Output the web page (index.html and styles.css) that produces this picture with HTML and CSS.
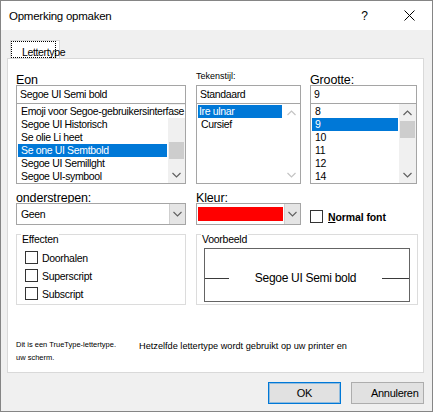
FILE: index.html
```html
<!DOCTYPE html>
<html lang="nl">
<head>
<meta charset="utf-8">
<title>Opmerking opmaken</title>
<link rel="stylesheet" href="styles.css">
</head>
<body>
<div class="window">
  <div class="titlebar">
    <span class="title">Opmerking opmaken</span>
    <span class="help">?</span>
    <svg class="close" width="11" height="11" viewBox="0 0 11 11"><path d="M0.5 0.5 L10.5 10.5 M10.5 0.5 L0.5 10.5" stroke="#000" stroke-width="1" fill="none"/></svg>
  </div>
  <div class="client">
    <div class="tabs">
      <div class="tab"><div class="tab-focus"><span class="tab-label">Lettertype</span></div></div>
    </div>
    <div class="panel">
      <div class="top">
        <div class="col">
          <div class="lbl-area"><span class="lbl">Eon</span></div>
          <div class="field">Segoe UI Semi bold</div>
          <div class="list">
            <div class="items">
              <div class="item wide">Emoji voor Segoe-gebruikersinterfase</div>
              <div class="item">Segoe UI Historisch</div>
              <div class="item">Se olie Li heet</div>
              <div class="item sel">Se one UI Semtbold</div>
              <div class="item">Segoe UI Semillght</div>
              <div class="item">Segoe UI-symbool</div>
            </div>
            <div class="vscroll">
              <div class="arrow"><svg width="9" height="6" viewBox="0 0 9 6"><path d="M0.5 5 L4.5 1 L8.5 5" stroke="#606060" stroke-width="1.2" fill="none"/></svg></div>
              <div class="track"><div class="thumb t1"></div></div>
              <div class="arrow"><svg width="9" height="6" viewBox="0 0 9 6"><path d="M0.5 1 L4.5 5 L8.5 1" stroke="#606060" stroke-width="1.2" fill="none"/></svg></div>
            </div>
          </div>
        </div>
        <div class="col col2">
          <div class="lbl-area"><span class="lbl small">Tekenstijl:</span></div>
          <div class="field">Standaard</div>
          <div class="list">
            <div class="items">
              <div class="item sel short">Ire ulnar</div>
              <div class="item">Cursief</div>
            </div>
            <div class="vscroll disabled">
              <div class="arrow"><svg width="9" height="6" viewBox="0 0 9 6"><path d="M0.5 5 L4.5 1 L8.5 5" stroke="#c4c4c4" stroke-width="1.2" fill="none"/></svg></div>
              <div class="track"></div>
              <div class="arrow"><svg width="9" height="6" viewBox="0 0 9 6"><path d="M0.5 1 L4.5 5 L8.5 1" stroke="#c4c4c4" stroke-width="1.2" fill="none"/></svg></div>
            </div>
          </div>
        </div>
        <div class="col">
          <div class="lbl-area"><span class="lbl">Grootte:</span></div>
          <div class="field">9</div>
          <div class="list">
            <div class="items">
              <div class="item">8</div>
              <div class="item sel">9</div>
              <div class="item">10</div>
              <div class="item">11</div>
              <div class="item">12</div>
              <div class="item">14</div>
            </div>
            <div class="vscroll">
              <div class="arrow"><svg width="9" height="6" viewBox="0 0 9 6"><path d="M0.5 5 L4.5 1 L8.5 5" stroke="#606060" stroke-width="1.2" fill="none"/></svg></div>
              <div class="track"><div class="thumb t3"></div></div>
              <div class="arrow"><svg width="9" height="6" viewBox="0 0 9 6"><path d="M0.5 1 L4.5 5 L8.5 1" stroke="#606060" stroke-width="1.2" fill="none"/></svg></div>
            </div>
          </div>
        </div>
      </div>

      <div class="mid">
        <div class="col">
          <span class="lbl">onderstrepen:</span>
          <div class="select">
            <span class="select-value">Geen</span>
            <span class="drop"><svg width="9" height="6" viewBox="0 0 9 6"><path d="M0.5 1 L4.5 5 L8.5 1" stroke="#606060" stroke-width="1.1" fill="none"/></svg></span>
          </div>
        </div>
        <div class="col col2">
          <span class="lbl">Kleur:</span>
          <div class="select">
            <span class="swatch"></span>
            <span class="drop"><svg width="9" height="6" viewBox="0 0 9 6"><path d="M0.5 1 L4.5 5 L8.5 1" stroke="#606060" stroke-width="1.1" fill="none"/></svg></span>
          </div>
        </div>
        <div class="col normal">
          <span class="check"></span>
          <span class="normal-label"><u>N</u>ormal font</span>
        </div>
      </div>

      <div class="groups">
        <div class="group effects">
          <span class="group-title">Effecten</span>
          <div class="check-row first"><span class="check"></span><span class="check-label">Doorhalen</span></div>
          <div class="check-row"><span class="check"></span><span class="check-label">Superscript</span></div>
          <div class="check-row"><span class="check"></span><span class="check-label">Subscript</span></div>
        </div>
        <div class="group sample">
          <span class="group-title">Voorbeeld</span>
          <div class="preview">
            <span class="rule left"></span>
            <span class="preview-text">Segoe UI Semi bold</span>
            <span class="rule right"></span>
          </div>
        </div>
      </div>

      <div class="note">
        <div class="note-left">
          <div class="note-line">Dit is een TrueType-lettertype.</div>
          <div class="note-line second">uw scherm.</div>
        </div>
        <div class="note-right">Hetzelfde lettertype wordt gebruikt op uw printer en</div>
      </div>
    </div>
    <div class="buttons">
      <div class="btn default">OK</div>
      <div class="btn cancel">Annuleren</div>
    </div>
  </div>
</div>
</body>
</html>
```

FILE: styles.css
```css
* { box-sizing: border-box; }
html, body { margin: 0; padding: 0; }
body {
  width: 433px;
  height: 412px;
  overflow: hidden;
  font-family: "Liberation Sans", Arial, sans-serif;
  color: #000;
  background: #fff;
}
.window {
  width: 433px;
  height: 412px;
  border: 1px solid #858585;
  display: flex;
  flex-direction: column;
  background: #f0f0f0;
}
.titlebar {
  flex: none;
  height: 29px;
  background: #fff;
  display: flex;
  align-items: center;
}
.title {
  flex: 1;
  margin-left: 8px;
  font-size: 11.5px;
  letter-spacing: -0.25px;
}
.help {
  font-size: 12px;
  margin-right: 36px;
}
.close {
  margin-right: 17px;
}

.client {
  flex: 1;
  display: flex;
  flex-direction: column;
  padding: 10px 8px 0 6px;
}
.tabs {
  height: 18px;
  display: flex;
}
.tab {
  width: 50px;
  height: 18px;
  margin-left: 3px;
  background: #fff;
  border: 1px solid #d9d9d9;
  border-bottom: none;
  position: relative;
  z-index: 1;
}
.tab-focus {
  width: 45px;
  height: 17px;
  border: 1px dotted #000;
  padding-left: 10px;
  padding-top: 4px;
  font-size: 10.5px;
  letter-spacing: -0.35px;
  line-height: 12px;
  white-space: nowrap;
}
.panel {
  height: 315px;
  background: #fff;
  border: 1px solid #d9d9d9;
  padding: 0 5px 0 8px;
  display: flex;
  flex-direction: column;
}

/* top row */
.top {
  display: grid;
  grid-template-columns: 170px 106px 107px;
  column-gap: 9px;
}
.col { display: flex; flex-direction: column; }
.col2 { padding-left: 1px; }
.lbl-area {
  height: 26px;
  display: flex;
  align-items: flex-end;
}
.lbl {
  font-size: 12.5px;
  letter-spacing: -0.15px;
  line-height: 14px;
  margin-bottom: -2px;
}
.lbl.small {
  font-size: 9px;
  letter-spacing: 0;
  line-height: 11px;
  margin-bottom: 3px;
}
.field {
  position: relative;
  height: 19px;
  border: 1px solid #a5a5a5;
  background: #fff;
  padding: 0 0 0 3px;
  font-size: 10.5px;
  letter-spacing: -0.35px;
  line-height: 17px;
  white-space: nowrap;
}
.list {
  height: 80px;
  border: 1px solid #a5a5a5;
  border-top: none;
  display: flex;
}
.items {
  flex: 1;
  min-width: 0;
  padding-top: 1px;
}
.item {
  height: 13px;
  line-height: 13px;
  font-size: 10.5px;
  letter-spacing: -0.35px;
  padding-left: 3px;
  margin: 0 1px;
  white-space: nowrap;
}
.item.wide {
  position: relative;
  z-index: 1;
  width: 168px;
  background: #fff;
  margin: 0;
  padding-left: 4px;
}
.item.sel {
  background: #0078d7;
  color: #fff;
}
.item.sel.short { padding-left: 1px; }
.vscroll {
  width: 17px;
  flex: none;
  background: #f0f0f0;
  display: flex;
  flex-direction: column;
}
.vscroll.disabled { background: #fff; }
.arrow {
  height: 17px;
  display: flex;
  align-items: center;
  justify-content: center;
}
.track { flex: 1; }
.thumb {
  width: 15px;
  height: 17px;
  margin-left: 1px;
  background: #cdcdcd;
}
.thumb.t1 { margin-top: 21px; }
.thumb.t3 { margin-top: 0; }

/* mid row */
.mid {
  display: grid;
  grid-template-columns: 170px 106px 107px;
  column-gap: 9px;
  margin-top: 5px;
}
.mid .lbl { height: 14px; margin-top: 2px; margin-bottom: -2px; }
.select {
  height: 22px;
  border: 1px solid #a5a5a5;
  display: flex;
  align-items: stretch;
  background: #fff;
}
.select-value {
  flex: 1;
  padding-left: 4px;
  font-size: 10.5px;
  letter-spacing: -0.35px;
  line-height: 20px;
}
.swatch {
  flex: 1;
  margin: 3px 1px 3px 1px;
  background: #ff0000;
}
.drop {
  width: 16px;
  flex: none;
  background: #e5e5e5;
  border-left: 1px solid #cfcfcf;
  display: flex;
  align-items: center;
  justify-content: center;
}
.normal {
  flex-direction: row;
  align-items: center;
  padding-top: 19px;
}
.check {
  width: 13px;
  height: 13px;
  border: 1px solid #333;
  background: #fff;
  flex: none;
}
.normal-label {
  margin-left: 5px;
  font-size: 10.5px;
  font-weight: bold;
  letter-spacing: -0.1px;
}
.normal-label u { text-underline-offset: 1px; }

/* groups */
.groups {
  display: grid;
  grid-template-columns: 170px 222px;
  column-gap: 10px;
  margin-top: 9px;
}
.group {
  height: 71px;
  border: 1px solid #dcdcdc;
  display: flex;
  flex-direction: column;
}
.group-title {
  display: block;
  width: fit-content;
  margin: -1px 0 0 4px;
  padding: 0 1px;
  background: #fff;
  font-size: 10.5px;
  letter-spacing: -0.25px;
  line-height: 11px;
}
.check-row {
  display: flex;
  align-items: center;
  height: 13px;
  margin: 5px 0 0 8px;
}
.check-row.first { margin-top: 6px; }
.check-label {
  margin-left: 4px;
  font-size: 10.5px;
  letter-spacing: -0.3px;
}
.preview {
  height: 54px;
  margin: 3px 7px 0 7px;
  border: 1px solid #646464;
  display: flex;
  align-items: center;
  padding-top: 6px;
}
.rule {
  height: 1px;
  background: #3a3a3a;
  flex: none;
}
.rule.left { width: 24px; }
.rule.right { width: 27px; }
.preview-text {
  flex: 1;
  text-align: center;
  font-size: 12px;
  letter-spacing: -0.3px;
}

/* note */
.note {
  display: flex;
  margin-top: 35px;
}
.note-left {
  width: 123px;
  font-size: 7.5px;
}
.note-line { height: 13px; line-height: 10px; }
.note-right {
  font-size: 9.2px;
  line-height: 12px;
  padding-top: 0;
}

.buttons {
  display: flex;
  justify-content: flex-end;
  gap: 10px;
  margin-top: 9px;
}
.btn {
  width: 73px;
  height: 22px;
  background: #e1e1e1;
  border: 1px solid #adadad;
  font-size: 11px;
  letter-spacing: -0.3px;
  line-height: 20px;
  text-align: center;
}
.btn.default {
  border-color: #0078d7;
  box-shadow: inset 0 0 0 1px rgba(0, 120, 215, 0.35);
}
.btn.cancel { text-align: left; padding-left: 19px; }
```
